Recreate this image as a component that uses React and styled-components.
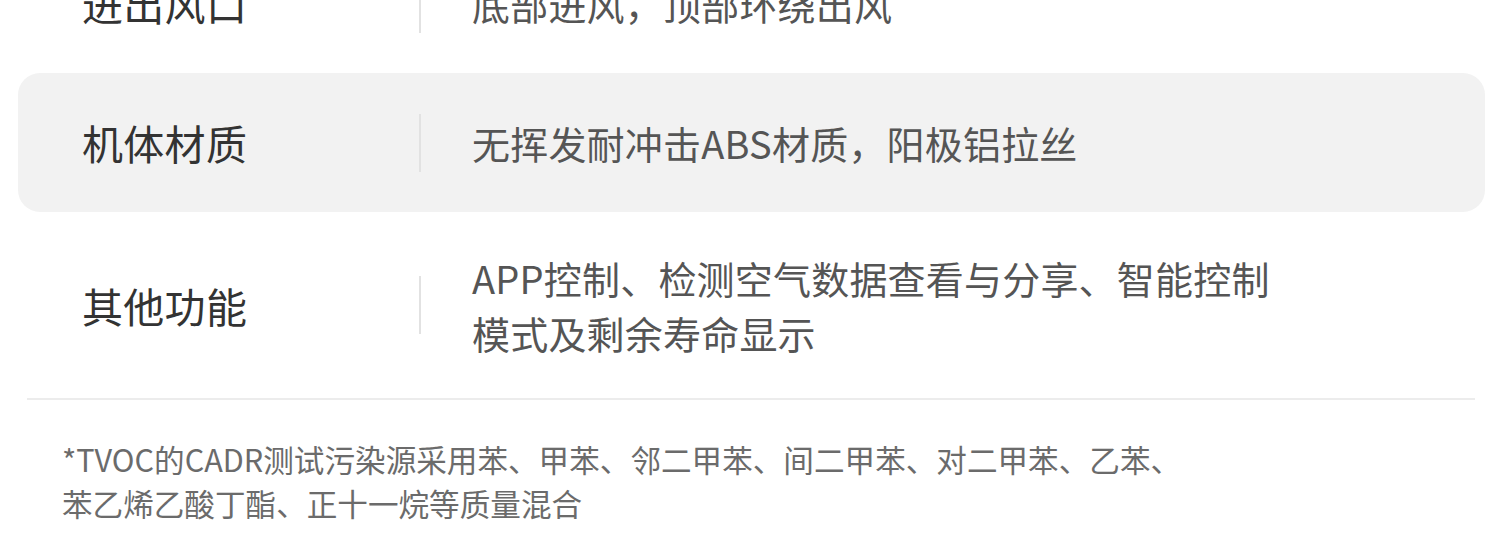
import React from 'react';
import styled, { createGlobalStyle } from 'styled-components';

const GlobalStyle = createGlobalStyle`
  html, body {
    margin: 0;
    padding: 0;
    background: #ffffff;
  }

  body {
    font-family: "Noto Sans CJK SC", "Noto Sans", sans-serif;
    -webkit-font-smoothing: antialiased;
  }
`

const Page = styled.div`
  width: 1500px;
  height: 554px;
  overflow: hidden;
  box-sizing: border-box;
  padding: 0 15px 0 18px;
`

// the first row is cut off by the top of the picture
const SpecList = styled.div`
  display: flex;
  flex-direction: column;
  margin-top: -66px;
`

const Row = styled.div`
  display: flex;
  align-items: center;
  box-sizing: border-box;
  min-height: 139px;
  padding: 38px 0 38px 64px;
  border-radius: 22px;
  background: ${({ $shaded }) => ($shaded ? '#f2f2f2' : 'transparent')};
`

const Label = styled.div`
  flex: 0 0 337px;
  font-size: 41px;
  line-height: 55px;
  color: #333333;
  letter-spacing: 0.3px;
`

const Divider = styled.div`
  flex: 0 0 2px;
  height: 58px;
  background: #e2e2e2;
`

const Value = styled.div`
  margin-left: 51px;
  max-width: 820px;
  font-size: 38px;
  line-height: 55px;
  color: #555555;
  letter-spacing: 0.2px;
`

const Rule = styled.hr`
  margin: 0 10px 0 9px;
  border: 0;
  height: 2px;
  background: #ececec;
`

const Footnote = styled.p`
  margin: 37px 0 0 44px;
  max-width: 1160px;
  font-size: 30.6px;
  line-height: 44px;
  color: #6b6b6b;
`

const specs = [
  { label: '进出风口', value: '底部进风，顶部环绕出风' },
  { label: '机体材质', value: '无挥发耐冲击ABS材质，阳极铝拉丝', shaded: true },
  {
    label: '其他功能',
    value: ['APP控制、检测空气数据查看与分享、智能控制', '模式及剩余寿命显示'],
  },
]

const App = () => (
  <>
    <GlobalStyle />
    <Page>
      <SpecList>
        {specs.map(spec => (
          <Row key={spec.label} $shaded={spec.shaded}>
            <Label>{spec.label}</Label>
            <Divider />
            <Value>
              {Array.isArray(spec.value)
                ? spec.value.map(line => <div key={line}>{line}</div>)
                : spec.value}
            </Value>
          </Row>
        ))}
      </SpecList>
      <Rule />
      <Footnote>
        *TVOC的CADR测试污染源采用苯、甲苯、邻二甲苯、间二甲苯、对二甲苯、乙苯、
        <br />
        苯乙烯乙酸丁酯、正十一烷等质量混合
      </Footnote>
    </Page>
  </>
)

export default App
